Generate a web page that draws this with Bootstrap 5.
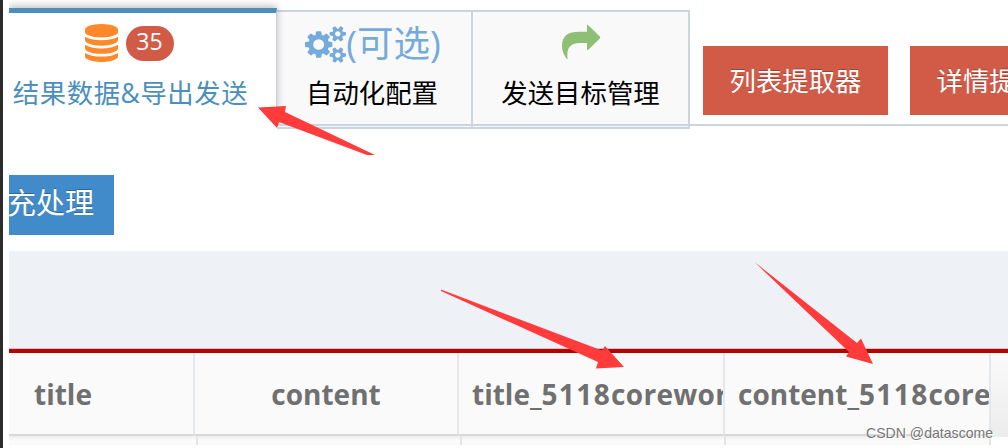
<!DOCTYPE html>
<html lang="zh-CN">
<head>
    <meta charset="UTF-8">
    <meta name="viewport" content="width=device-width, initial-scale=1.0">
    <title>结果数据&amp;导出发送</title>
    <link rel="stylesheet" href="https://cdn.jsdelivr.net/npm/bootstrap@5.3.0/dist/css/bootstrap.min.css">
    <style>
        body {
            height: 448px;
            overflow: hidden;
            background: #fff;
            font-family: "Open Sans", "Noto Sans CJK SC", sans-serif;
        }

        .page-shell {
            height: 448px;
            border-left: 3px solid #2d2d2d;
            padding-left: 6px;
            overflow: hidden;
        }

        .top-bar {
            height: 129px;
            padding-top: 8px;
            overflow: hidden;
        }

        .data-tabs {
            height: 121px;
            flex: none;
            flex-wrap: nowrap;
            border: 0;
        }

        .data-tabs .nav-link {
            position: relative;
            height: 119px;
            margin: 2px 0 0;
            padding: 13px 0 0;
            border: 0 solid #cbd5e0;
            border-width: 2px 2px 2px 0;
            border-radius: 0;
            background: #f9f9f9;
            color: #000;
            text-align: center;
            white-space: nowrap;
        }

        .data-tabs .nav-link.active {
            height: 121px;
            margin-top: 0;
            padding-top: 11px;
            border-color: #4c8fbd #c5d0dc #fff;
            border-width: 5px 1px 0 0;
            background: #fff;
            color: #4c8fbd;
            box-shadow: 0 -2px 7px rgba(0, 0, 0, .25);
            clip-path: inset(-8px -8px 5px 0);
            z-index: 1;
        }

        .tab-results { width: 268px; }
        .tab-config { width: 196px; }
        .tab-target { width: 217px; }

        .tab-icon {
            height: 38px;
        }

        .tab-label {
            font-size: 26.4px;
            line-height: 34px;
            margin-top: 13px;
        }

        .tab-results .tab-label {
            letter-spacing: .55px;
            margin-top: 14px;
            padding-right: 24px;
        }

        .tab-results .tab-icon {
            padding-right: 27px;
        }

        .tab-config .tab-label {
            padding-right: 4px;
        }

        .optional-mark {
            color: #75abdc;
            font-size: 36.5px;
            line-height: 36px;
            margin-top: -3px;
        }

        .tab-config .tab-icon {
            padding-right: 2px;
        }

        .count-pill {
            width: 48px;
            height: 35px;
            padding: 0;
            border-radius: 18px;
            background: #d15b47;
            font-size: 23px;
            font-weight: 400;
            line-height: 31px;
        }

        .tab-rule {
            height: 2px;
            margin: -5px 0 0 268px;
            background: #cbd5e0;
            position: relative;
        }

        .extract-btn {
            height: 69px;
            width: 185px;
            padding: 0;
            flex: none;
            border: 0;
            border-radius: 0;
            background: #d15b47;
            color: #fff;
            font-size: 26.4px;
            line-height: 70px;
            text-shadow: 0 -1px 0 rgba(0, 0, 0, .25);
            margin-top: 38px;
        }

        .extract-list { margin-left: 13px; }
        .extract-detail { margin-left: 22px; }

        .fill-btn {
            display: flex;
            justify-content: flex-end;
            width: 105px;
            height: 60px;
            margin-top: 49px;
            padding: 0 20px 0 0;
            border: 0;
            border-radius: 0;
            background: #428bca;
            color: #fff;
            font-size: 29px;
            line-height: 56px;
            white-space: nowrap;
            overflow: hidden;
            text-shadow: 0 -1px 0 rgba(0, 0, 0, .25);
        }

        .table-band {
            height: 98px;
            margin-top: 16px;
            background: #eef1f6;
            border-bottom: 1px solid #c9c6ca;
        }

        .field-row {
            height: 87px;
            border-top: 4px solid #b80000;
        }

        .field-cell {
            flex: none;
            height: 83px;
            border-right: 2px solid #e3e8ed;
            border-bottom: 2px solid #d8d8d8;
            background: #fafafa;
            color: #707070;
            font-size: 28px;
            font-weight: 700;
            line-height: 82px;
            white-space: nowrap;
            overflow: hidden;
        }

        .col-title { width: 186px; padding-left: 25px; }
        .col-content { width: 264px; text-align: center; }
        .col-core { width: 266px; padding-left: 13px; }

        .field-code {
            letter-spacing: 1.4px;
        }

        .field-tail {
            letter-spacing: .3px;
        }

        .field-spare {
            height: 84px;
            background: linear-gradient(#fafafa, #ececec);
        }

        .next-row {
            height: 9px;
            background: linear-gradient(#ededed, #fafafa 4px);
            width: 982px;
        }

        .next-row div {
            border-right: 2px solid #e4e4e4;
        }

        .next-a { width: 189px; }
        .next-b { width: 264px; }

        .pointer-layer {
            position: absolute;
            left: 0;
            top: 0;
            z-index: 5;
            pointer-events: none;
        }

        .site-tag {
            position: absolute;
            left: 866px;
            top: 423px;
            color: #777;
            font: 14.1px/20px "Liberation Sans", sans-serif;
            white-space: nowrap;
            text-shadow: 1px 1px 0 #fff;
        }
    </style>
</head>
<body>
    <div class="page-shell">
        <div class="top-bar d-flex align-items-start">
            <ul class="nav nav-tabs data-tabs">
                <li class="nav-item">
                    <a class="nav-link active tab-results" href="#">
                        <div class="tab-icon d-flex justify-content-center align-items-center">
                            <svg width="33" height="38" viewBox="0 0 1536 1792" preserveAspectRatio="none" fill="#ff892a"><path d="M768 768q237 0 443-43t325-127v170q0 69-103 128t-280 93.500-385 34.500-385-34.500-280-93.500-103-128v-170q119 84 325 127t443 43zm0 768q237 0 443-43t325-127v170q0 69-103 128t-280 93.500-385 34.500-385-34.500-280-93.500-103-128v-170q119 84 325 127t443 43zm0-384q237 0 443-43t325-127v170q0 69-103 128t-280 93.500-385 34.500-385-34.500-280-93.500-103-128v-170q119 84 325 127t443 43zm0-1152q208 0 385 34.500t280 93.500 103 128v128q0 69-103 128t-280 93.500-385 34.500-385-34.500-280-93.500-103-128v-128q0-69 103-128t280-93.500 385-34.500z"/></svg>
                            <span class="badge count-pill ms-2">35</span>
                        </div>
                        <div class="tab-label">结果数据&amp;导出发送</div>
                    </a>
                </li>
                <li class="nav-item">
                    <a class="nav-link tab-config" href="#">
                        <div class="tab-icon d-flex justify-content-center align-items-center">
                            <svg width="41" height="37" viewBox="0 0 1920 1792" preserveAspectRatio="none" fill="#75abdc"><path d="M896 896q0-106-75-181t-181-75-181 75-75 181 75 181 181 75 181-75 75-181zm768 512q0-52-38-90t-90-38-90 38-38 90q0 53 37.500 90.500t90.500 37.500 90.500-37.500 37.500-90.500zm0-1024q0-52-38-90t-90-38-90 38-38 90q0 53 37.500 90.500t90.500 37.500 90.500-37.500 37.500-90.500zm-384 421v185q0 10-7 19.500t-16 10.500l-155 24q-11 35-32 76 34 48 90 115 7 11 7 20 0 12-7 19-23 30-82.500 89.500t-78.500 59.500q-11 0-21-7l-115-90q-37 19-77 31-11 108-23 155-7 24-30 24h-186q-11 0-20-7.500t-10-17.500l-23-153q-34-10-75-31l-118 89q-7 7-20 7-11 0-21-8-144-133-144-160 0-9 7-19 10-14 41-53t47-61q-23-44-35-82l-152-24q-10-1-17-9.500t-7-19.500v-185q0-10 7-19.500t16-10.500l155-24q11-35 32-76-34-48-90-115-7-11-7-20 0-12 7-20 22-30 82-89t79-59q11 0 21 7l115 90q34-18 77-32 11-108 23-154 7-24 30-24h186q11 0 20 7.500t10 17.500l23 153q34 10 75 31l118-89q8-7 20-7 11 0 21 8 144 133 144 160 0 8-7 19-12 16-42 54t-45 60q23 48 34 82l152 23q10 2 17 10.500t7 19.500zm640 533v140q0 16-149 31-12 27-30 52 51 113 51 138 0 4-4 7-122 71-124 71-8 0-46-47t-52-68q-20 2-30 2t-30-2q-14 21-52 68t-46 47q-2 0-124-71-4-3-4-7 0-25 51-138-18-25-30-52-149-15-149-31v-140q0-16 149-31 13-29 30-52-51-113-51-138 0-4 4-7 4-2 35-20t59-34 30-16q8 0 46 46.500t52 67.500q20-2 30-2t30 2q51-71 92-112l6-2q4 0 124 70 4 3 4 7 0 25-51 138 17 23 30 52 149 15 149 31zm0-1024v140q0 16-149 31-12 27-30 52 51 113 51 138 0 4-4 7-122 71-124 71-8 0-46-47t-52-68q-20 2-30 2t-30-2q-14 21-52 68t-46 47q-2 0-124-71-4-3-4-7 0-25 51-138-18-25-30-52-149-15-149-31v-140q0-16 149-31 13-29 30-52-51-113-51-138 0-4 4-7 4-2 35-20t59-34 30-16q8 0 46 46.500t52 67.500q20-2 30-2t30 2q51-71 92-112l6-2q4 0 124 70 4 3 4 7 0 25-51 138 17 23 30 52 149 15 149 31z"/></svg>
                            <span class="optional-mark">(可选)</span>
                        </div>
                        <div class="tab-label">自动化配置</div>
                    </a>
                </li>
                <li class="nav-item">
                    <a class="nav-link tab-target" href="#">
                        <div class="tab-icon d-flex justify-content-center align-items-start">
                            <svg width="40" height="36" viewBox="0 0 40 36" fill="#8dbf75"><path d="M26 .8Q26 -.8 27.500 .4L38.800 11.400Q39.700 12.400 38.800 13.400L27.500 24.600Q26 25.800 26 24.200V18H19C9 18 5.500 23 6.500 33.500Q6.500 35 5.300 33.500C2.500 29 1 25.500 1 21C1 10 8 6.700 18 6.700H26Z"/></svg>
                        </div>
                        <div class="tab-label">发送目标管理</div>
                    </a>
                </li>
            </ul>
            <button type="button" class="btn extract-btn extract-list">列表提取器</button>
            <button type="button" class="btn extract-btn extract-detail">详情提取器</button>
        </div>
        <div class="tab-rule"></div>

        <button type="button" class="btn fill-btn">充处理</button>

        <div class="table-band"></div>
        <div class="field-row d-flex">
            <div class="field-cell col-title">title</div>
            <div class="field-cell col-content">content</div>
            <div class="field-cell col-core">title_<span class="field-code">5118</span><span class="field-tail">corewor</span></div>
            <div class="field-cell col-core">content_<span class="field-code">5118</span><span class="field-tail">core</span></div>
            <div class="field-spare flex-fill"></div>
        </div>
        <div class="next-row d-flex">
            <div class="next-a"></div>
            <div class="next-b"></div>
            <div class="next-b"></div>
            <div class="flex-fill"></div>
        </div>
    </div>

    <!-- callout arrows over the tabs and the column names -->
    <svg class="pointer-layer" width="1008" height="448" viewBox="0 0 1008 448" fill="#ff3b3b">
        <path d="M258 107.500L286 106L285 112L375 155H367L279 122L277 128Z"/>
        <path d="M441 289.500L602 350.500L605 346L624 367L596 368.500L598 362L441 291Z"/>
        <path d="M754.500 262L857 343L861 338.500L873 364L846 356.500L849 352Z"/>
    </svg>
    <div class="site-tag">CSDN @datascome</div>

    <script src="https://cdn.jsdelivr.net/npm/bootstrap@5.3.0/dist/js/bootstrap.bundle.min.js"></script>
</body>
</html>
